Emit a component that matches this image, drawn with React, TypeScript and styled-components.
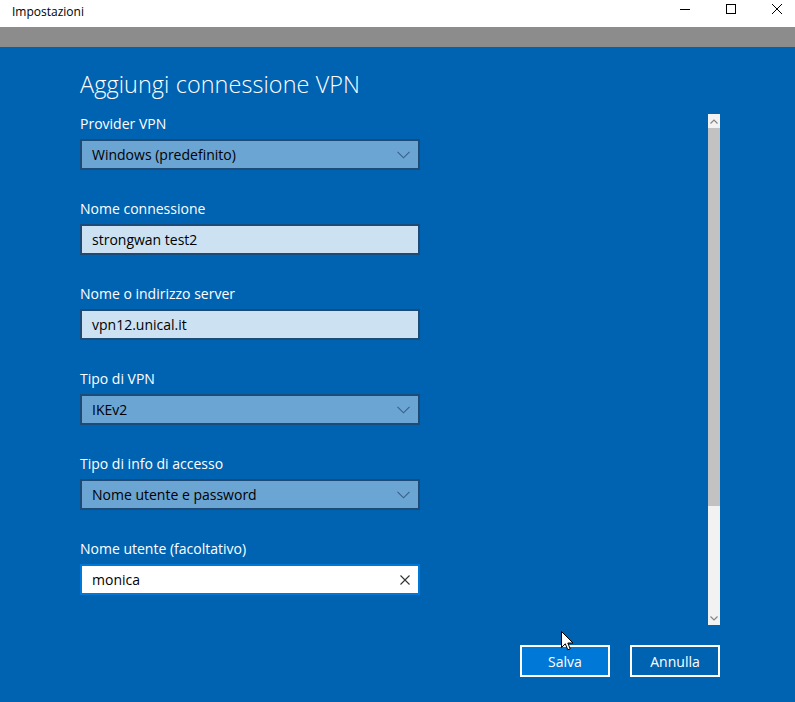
import React from "react";
import styled, { createGlobalStyle } from "styled-components";

const Global = createGlobalStyle`
  html, body { margin: 0; padding: 0; }
  body { width: 795px; height: 702px; overflow: hidden; font-family: "Segoe UI", "Open Sans", "Noto Sans", sans-serif; }
`;

const Window = styled.div`
  width: 795px;
  height: 702px;
  display: flex;
  flex-direction: column;
  background: #0063b1;
  position: relative;
  overflow: hidden;
`;

const TitleBar = styled.div`
  height: 27px;
  background: #ffffff;
  display: flex;
  align-items: center;
  justify-content: space-between;
  padding-left: 12px;
`;

const TitleText = styled.span`
  font-size: 12px;
  color: #000;
  margin-top: -5px;
`;

const Controls = styled.div`
  display: flex;
  height: 100%;
  margin-right: -5px;
`;

const Ctrl = styled.div`
  width: 46px;
  height: 100%;
  display: flex;
  align-items: center;
  justify-content: center;
  margin-top: -5px;
`;

const GrayBand = styled.div`
  height: 20px;
  background: #8c8c8c;
`;

const Body = styled.div`
  flex: 1;
  display: flex;
  flex-direction: column;
  padding: 22px 75px 0 80px;
`;

const Heading = styled.h1`
  margin: 0;
  font-weight: 300;
  font-size: 23.4px;
  line-height: 30px;
  color: #fff;
  letter-spacing: 0.1px;
`;

const Main = styled.div`
  display: flex;
  justify-content: space-between;
  margin-top: 15px;
`;

const Form = styled.div`
  width: 340px;
  display: flex;
  flex-direction: column;
  gap: 29px;
`;

const Field = styled.div`
  display: flex;
  flex-direction: column;
  gap: 6px;
`;

const Label = styled.label`
  font-size: 14px;
  line-height: 19px;
  color: #fff;
`;

type BoxKind = "select" | "text" | "focus";

const Box = styled.div<{ $kind: BoxKind }>`
  height: 31px;
  box-sizing: border-box;
  border: 2px solid
    ${(p) => (p.$kind === "focus" ? "#0078d7" : "#1c4b78")};
  background: ${(p) =>
    p.$kind === "select" ? "#6ba5d4" : p.$kind === "text" ? "#cce2f2" : "#ffffff"};
  display: flex;
  align-items: center;
  justify-content: space-between;
  padding: 0 8px 0 10px;
  font-size: 14px;
  color: #000;
`;

const Scroll = styled.div`
  width: 12px;
  height: 511px;
  background: #f2f2f2;
  display: flex;
  flex-direction: column;
`;

const ArrowCell = styled.div`
  height: 14px;
  display: flex;
  align-items: center;
  justify-content: center;
`;

const Thumb = styled.div`
  height: 378px;
  background: #c2c2c2;
`;

const Track = styled.div`
  flex: 1;
`;

const Footer = styled.div`
  display: flex;
  justify-content: flex-end;
  gap: 20px;
  margin-top: 20px;
`;

const Button = styled.button<{ $primary?: boolean }>`
  width: 90px;
  height: 32px;
  box-sizing: border-box;
  border: 2px solid #fff;
  background: ${(p) => (p.$primary ? "#0078d7" : "#0063b1")};
  color: #fff;
  font-family: inherit;
  font-size: 14px;
  padding: 0;
`;

const Cursor = styled.svg`
  position: absolute;
  left: 561px;
  top: 631px;
`;

const Chevron = () => (
  <svg width="13" height="8" viewBox="0 0 13 8">
    <path d="M0.5 0.8 L6.5 6.8 L12.5 0.8" fill="none" stroke="#3a5f84" strokeWidth="1.1" />
  </svg>
);

const ClearX = () => (
  <svg width="10" height="10" viewBox="0 0 10 10">
    <path d="M0.5 0.5 L9.5 9.5 M9.5 0.5 L0.5 9.5" stroke="#333" strokeWidth="1.1" />
  </svg>
);

const fields: { label: string; value: string; kind: BoxKind }[] = [
  { label: "Provider VPN", value: "Windows (predefinito)", kind: "select" },
  { label: "Nome connessione", value: "strongwan test2", kind: "text" },
  { label: "Nome o indirizzo server", value: "vpn12.unical.it", kind: "text" },
  { label: "Tipo di VPN", value: "IKEv2", kind: "select" },
  { label: "Tipo di info di accesso", value: "Nome utente e password", kind: "select" },
  { label: "Nome utente (facoltativo)", value: "monica", kind: "focus" },
];

export default function App() {
  return (
    <Window>
      <Global />
      <TitleBar>
        <TitleText>Impostazioni</TitleText>
        <Controls>
          <Ctrl>
            <svg width="10" height="10" viewBox="0 0 10 10">
              <path d="M0 5.5 H10" stroke="#000" strokeWidth="1" />
            </svg>
          </Ctrl>
          <Ctrl>
            <svg width="10" height="10" viewBox="0 0 10 10">
              <rect x="0.5" y="0.5" width="9" height="9" fill="none" stroke="#000" strokeWidth="1" />
            </svg>
          </Ctrl>
          <Ctrl>
            <svg width="10" height="10" viewBox="0 0 10 10">
              <path d="M0 0 L10 10 M10 0 L0 10" stroke="#000" strokeWidth="1" />
            </svg>
          </Ctrl>
        </Controls>
      </TitleBar>
      <GrayBand />
      <Body>
        <Heading>Aggiungi connessione VPN</Heading>
        <Main>
          <Form>
            {fields.map((f) => (
              <Field key={f.label}>
                <Label>{f.label}</Label>
                <Box $kind={f.kind}>
                  <span>{f.value}</span>
                  {f.kind === "select" && <Chevron />}
                  {f.kind === "focus" && <ClearX />}
                </Box>
              </Field>
            ))}
          </Form>
          <Scroll>
            <ArrowCell>
              <svg width="8" height="5" viewBox="0 0 8 5">
                <path d="M0.5 4.5 L4 1 L7.5 4.5" fill="none" stroke="#858585" strokeWidth="1.2" />
              </svg>
            </ArrowCell>
            <Thumb />
            <Track />
            <ArrowCell>
              <svg width="8" height="5" viewBox="0 0 8 5">
                <path d="M0.5 0.5 L4 4 L7.5 0.5" fill="none" stroke="#858585" strokeWidth="1.2" />
              </svg>
            </ArrowCell>
          </Scroll>
        </Main>
        <Footer>
          <Button $primary>Salva</Button>
          <Button>Annulla</Button>
        </Footer>
      </Body>
      <Cursor width="13" height="21" viewBox="0 0 13 21">
        <path d="M0.5 0.5 L0.5 16.5 L4.3 12.8 L6.8 18.8 L9.2 17.8 L6.8 12 L12 12 Z" fill="#fff" stroke="#000" strokeWidth="1" />
      </Cursor>
    </Window>
  );
}
